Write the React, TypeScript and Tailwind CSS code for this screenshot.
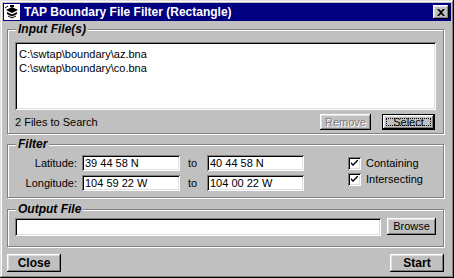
import React from "react";

const raised =
  "shadow-[inset_-1px_-1px_0_#000,inset_1px_1px_0_#fff,inset_-2px_-2px_0_#808080,inset_2px_2px_0_#dfdfdf]";
const sunken =
  "shadow-[inset_1px_1px_0_#808080,inset_-1px_-1px_0_#fff,inset_2px_2px_0_#000,inset_-2px_-2px_0_#dfdfdf]";
const etched = "border border-[#808080] shadow-[inset_1px_1px_0_#fff,1px_1px_0_#fff]";
const font = "font-['Liberation_Sans',Arial,sans-serif]";

function GroupLabel({ children }: { children: React.ReactNode }) {
  return (
    <div className="absolute left-[8px] top-[-8px] bg-[#c0c0c0] px-[2px] text-[12px] leading-[14px] font-bold italic text-black">
      {children}
    </div>
  );
}

function Check({ label }: { label: string }) {
  return (
    <div className="flex items-center h-[13px]">
      <div className={`w-[13px] h-[13px] bg-white ${sunken} flex items-center justify-center`}>
        <svg width="7" height="7" viewBox="0 0 7 7">
          <path d="M0 2 L0 4 L2 6 L7 1 L7 -1 L2 4 Z" fill="#000" />
        </svg>
      </div>
      <span className="ml-[5px] text-[11px] leading-[13px] text-black">{label}</span>
    </div>
  );
}

function Field({ value, w }: { value: string; w: string }) {
  return (
    <div className={`${w} h-[16px] bg-white ${sunken} pl-[3px] text-[11px] leading-[16px] text-black`}>
      {value}
    </div>
  );
}

export default function App() {
  return (
    <div
      className={`w-[454px] h-[278px] bg-[#c0c0c0] p-[3px] flex flex-col ${font} shadow-[inset_-1px_-1px_0_#000,inset_1px_1px_0_#dfdfdf,inset_-2px_-2px_0_#808080,inset_2px_2px_0_#fff]`}
    >
      {/* title bar */}
      <div className="h-[18px] bg-[#000080] flex items-center pl-[1px] pr-[2px]">
        <svg width="16" height="16" viewBox="0 0 16 16" className="shrink-0">
          <rect x="0" y="0" width="16" height="16" fill="#fff" />
          <path d="M2 6 L8 3 L14 6 L8 9 Z" fill="#000" />
          <path d="M3 8 L8 10.5 L13 8 L13 10 L8 12.5 L3 10 Z" fill="#000" />
          <path d="M4 12 L8 14 L12 12" stroke="#000" strokeWidth="1" fill="none" />
          <rect x="6" y="1" width="4" height="2" fill="#000" />
          <path d="M1 4 L4 2" stroke="#000" strokeWidth="1" />
        </svg>
        <span className="ml-[4px] text-white text-[12px] font-bold leading-[18px] whitespace-nowrap">
          TAP Boundary File Filter (Rectangle)
        </span>
        <div className="flex-1" />
        <div className={`w-[16px] h-[14px] bg-[#c0c0c0] ${raised} flex items-center justify-center`}>
          <svg width="8" height="7" viewBox="0 0 8 7">
            <path d="M0 0 H2 L4 2 L6 0 H8 L5 3.5 L8 7 H6 L4 5 L2 7 H0 L3 3.5 Z" fill="#000" />
          </svg>
        </div>
      </div>

      {/* Input Files group */}
      <div className={`relative mt-[8px] ml-[4px] mr-[7px] h-[105px] ${etched} pt-[12px] pl-[7px]`}>
        <GroupLabel>Input File(s)</GroupLabel>
        <div className={`w-[421px] h-[68px] bg-white ${sunken} pt-[5px] pl-[4px] text-[11px] leading-[14px] text-black`}>
          <div>C:\swtap\boundary\az.bna</div>
          <div>C:\swtap\boundary\co.bna</div>
        </div>
        <div className="flex items-center mt-[4px] h-[16px]">
          <span className="text-[11px] leading-[13px] text-black">2 Files to Search</span>
          <div className="flex-1" />
          <div
            className={`w-[51px] h-[16px] ${raised} flex items-center justify-center text-[11px] text-[#808080] [text-shadow:1px_1px_0_#fff]`}
          >
            Remove
          </div>
          <div className="w-[53px] h-[16px] ml-[11px] mr-[8px] border border-black">
            <div className={`w-full h-full ${raised} p-[3px]`}>
              <div className="w-full h-full border border-dotted border-black flex items-center justify-center text-[11px] leading-[10px] text-black">
                Select
              </div>
            </div>
          </div>
        </div>
      </div>

      {/* Filter group */}
      <div className={`relative mt-[10px] ml-[4px] mr-[7px] h-[54px] ${etched} pt-[10px] pl-[7px] flex`}>
        <GroupLabel>Filter</GroupLabel>
        <div className="flex flex-col gap-[3px]">
          <div className="flex items-center">
            <span className="w-[62px] text-right text-[11px] text-black">Latitude:</span>
            <div className="ml-[5px]"><Field value="39 44 58 N" w="w-[98px]" /></div>
            <span className="w-[27px] pl-[8px] text-[11px] text-black">to</span>
            <Field value="40 44 58 N" w="w-[97px]" />
          </div>
          <div className="flex items-center">
            <span className="w-[62px] text-right text-[11px] text-black">Longitude:</span>
            <div className="ml-[5px]"><Field value="104 59 22 W" w="w-[98px]" /></div>
            <span className="w-[27px] pl-[8px] text-[11px] text-black">to</span>
            <Field value="104 00 22 W" w="w-[97px]" />
          </div>
        </div>
        <div className="ml-[44px] pt-[2px] flex flex-col gap-[3px]">
          <Check label="Containing" />
          <Check label="Intersecting" />
        </div>
      </div>

      {/* Output group */}
      <div className={`relative mt-[11px] ml-[4px] mr-[7px] h-[38px] ${etched} pt-[8px] pl-[7px] flex`}>
        <GroupLabel>Output File</GroupLabel>
        <div className={`w-[366px] h-[18px] bg-white ${sunken}`} />
        <div className={`ml-[6px] w-[49px] h-[17px] ${raised} flex items-center justify-center text-[11px] text-black`}>
          Browse
        </div>
      </div>

      {/* bottom buttons */}
      <div className="mt-[7px] ml-[4px] mr-[7px] flex justify-between">
        <div className={`w-[54px] h-[18px] ${raised} flex items-center justify-center text-[12px] font-bold text-black`}>
          Close
        </div>
        <div className={`w-[54px] h-[18px] ${raised} flex items-center justify-center text-[12px] font-bold text-black`}>
          Start
        </div>
      </div>
    </div>
  );
}
